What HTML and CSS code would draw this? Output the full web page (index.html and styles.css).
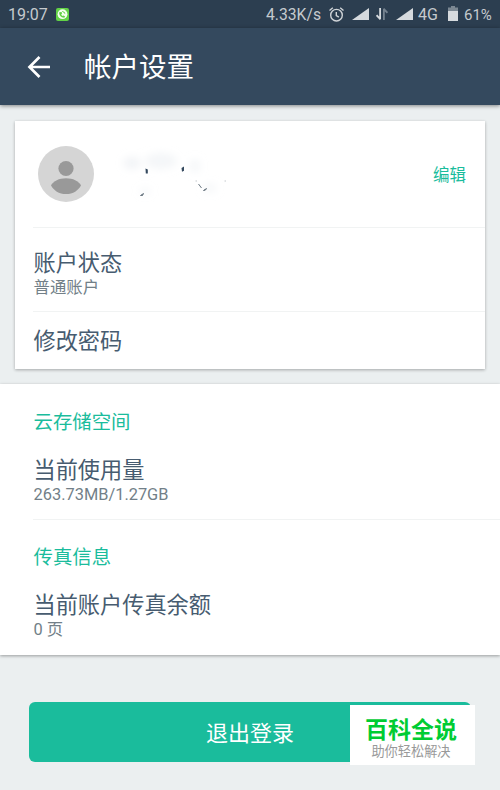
FILE: index.html
```html
<!DOCTYPE html>
<html lang="zh-CN">
<head>
    <meta charset="UTF-8">
    <meta name="viewport" content="width=device-width, initial-scale=1.0">
    <title>帐户设置</title>
    <link rel="stylesheet" href="styles.css">
</head>
<body>
    <div class="status-bar">
        <span class="status-bar__time">19:07</span>
        <svg class="status-bar__app" width="13" height="13" viewBox="0 0 13 13" aria-hidden="true">
            <rect width="13" height="13" rx="2" fill="#62d246"/>
            <circle cx="6.5" cy="6.2" r="4.9" fill="#f4fff0"/>
            <path d="M3.200 4.300c-.3 3 1.800 5.300 5 5.400l1-1.300-1.700-1-1 .6c-.7-.4-1.100-1-1.300-1.700l.9-.8-.5-1.400zM6 3.400c1.800-.2 3 .8 3.400 2.300l-1.200-.2C7.800 4.500 7.200 4 6 4z" fill="#62d246"/>
        </svg>
        <div class="status-bar__right">
            <span class="status-bar__speed">4.33K/s</span>
            <svg class="status-bar__alarm" width="15" height="15" viewBox="0 0 15 15" fill="none" stroke="#d0d4d8" stroke-width="1.4" aria-hidden="true">
                <circle cx="7.500" cy="8.200" r="5.800"/>
                <path d="M7.300 5v3.500l2.600 1.700M.5 3.500L3.800 .7M14.500 3.500L11.200 .7"/>
            </svg>
            <svg class="status-bar__signal" width="17" height="12" viewBox="0 0 17 12" aria-hidden="true">
                <path d="M17 0v12H0z" fill="#d6dade"/>
            </svg>
            <svg class="status-bar__data" width="12" height="12" viewBox="0 0 12 12" fill="none" stroke-width="1.800" aria-hidden="true">
                <path d="M4.100 0v11M4.500 11.300L.6 7.200" stroke="#d6dade"/>
                <path d="M7.900 12V1M7.500 .7l3.900 4.100" stroke="#75828f"/>
            </svg>
            <svg class="status-bar__signal" width="17" height="12" viewBox="0 0 17 12" aria-hidden="true">
                <path d="M17 0v12H0z" fill="#d6dade"/>
            </svg>
            <span class="status-bar__net">4G</span>
            <svg class="status-bar__battery" width="10" height="15" viewBox="0 0 10 15" aria-hidden="true">
                <path d="M3 0h4v1.500h3V6H0V1.500h3z" fill="#7b8792"/>
                <path d="M0 5h10v10H0z" fill="#d6dade"/>
            </svg>
            <span class="status-bar__level">61%</span>
        </div>
    </div>

    <header class="app-bar">
        <a href="#" class="app-bar__back" aria-label="返回">
            <svg width="24" height="24" viewBox="0 0 24 24" fill="none" stroke="#fff" stroke-width="2.700">
                <path d="M23 12H2.500M12.500 2L2.500 12l10 10"/>
            </svg>
        </a>
        <h1 class="app-bar__title">帐户设置</h1>
    </header>

    <main>
        <section class="card">
            <div class="profile">
                <svg class="profile__avatar" width="56" height="56" viewBox="0 0 56 56" aria-hidden="true">
                    <circle cx="28" cy="28" r="28" fill="#d5d5d5"/>
                    <circle cx="28" cy="22.500" r="7.600" fill="#999"/>
                    <path d="M13 39.200C15.500 35 21 32.200 28 32.200S40.500 35 43 39.200C40.500 44.500 35 48 28 48S15.500 44.500 13 39.200z" fill="#999"/>
                </svg>
                <!-- 名称和邮箱已抹去 -->
                <svg class="profile__name" width="120" height="56" viewBox="0 0 120 56" aria-hidden="true">
                    <defs>
                        <filter id="smudge" x="-100%" y="-100%" width="300%" height="300%">
                            <feGaussianBlur stdDeviation="4"/>
                        </filter>
                    </defs>
                    <g filter="url(#smudge)" fill="#dfe5eb">
                        <ellipse cx="17" cy="17" rx="9" ry="6" opacity=".45"/>
                        <ellipse cx="46" cy="15" rx="16" ry="8" opacity=".35"/>
                        <ellipse cx="80" cy="20" rx="5" ry="7" opacity=".35"/>
                        <ellipse cx="30" cy="45" rx="6" ry="3" opacity=".35"/>
                        <ellipse cx="95" cy="42" rx="7" ry="4" opacity=".35"/>
                    </g>
                    <path d="M30.500 22.500l2.300 1v4h-2zM66.500 22l2.500-1.500v4.300l-2 1z" fill="#34495e"/>
                    <path d="M25.500 49.500l3-2-1 2zM83.500 38l3 4M88.500 44.500l3-2-1 1.500z" fill="#6b7882" stroke="#6b7882"/>
                    <path d="M80.500 35h1.500M109.500 35h1.500" stroke="#c4c9cd"/>
                </svg>
                <a href="#" class="profile__edit">编辑</a>
            </div>
            <div class="item item--status">
                <div class="item__title">账户状态</div>
                <div class="item__text">普通账户</div>
            </div>
            <div class="item item--password">
                <div class="item__title">修改密码</div>
            </div>
        </section>

        <section class="panel">
            <div class="group">
                <h2 class="group__title">云存储空间</h2>
                <div class="item__title">当前使用量</div>
                <div class="item__text">263.73MB/1.27GB</div>
            </div>
            <div class="group">
                <h2 class="group__title">传真信息</h2>
                <div class="item__title">当前账户传真余额</div>
                <div class="item__text">0 页</div>
            </div>
        </section>

        <div class="actions">
            <button class="btn">退出登录</button>
            <div class="watermark">
                <div class="watermark__name">百科全说</div>
                <div class="watermark__text">助你轻松解决</div>
            </div>
        </div>
    </main>
</body>
</html>
```
FILE: styles.css
```css
:root {
    --primary: #1abc9c;
    --dark: #34495e;
    --darker: #2c3e50;
    --bg: #ebeff0;
    --grey: #727f88;
    --line: #f1f3f3;
    --font-family-base: Roboto, 'Noto Sans CJK SC', sans-serif;
}

* {
    box-sizing: border-box;
}

body {
    margin: 0;
    min-height: 790px;
    font-family: var(--font-family-base);
    background: var(--bg);
    color: #475c70;
    overflow: hidden;
}

a {
    text-decoration: none;
}

svg {
    display: block;
    flex-shrink: 0;
}

.status-bar {
    display: flex;
    align-items: center;
    height: 28px;
    padding: 0 8px;
    background: var(--darker);
    color: #c5cace;
    font-size: 16px;
    line-height: 26px;
    white-space: nowrap;
}

.status-bar span {
    padding-top: 2px;
}

.status-bar__time {
    width: 48px;
}

.status-bar__right {
    display: flex;
    align-items: center;
    margin-left: auto;
}

.status-bar__speed {
    width: 63px;
    font-size: 15.7px;
}

.status-bar__signal {
    margin-left: 8px;
}

.status-bar__data {
    margin-left: 7px;
}

.status-bar__net {
    width: 30px;
    margin-left: 5px;
}

.status-bar__battery {
    margin-bottom: 2px;
}

.status-bar__level {
    width: 28px;
    margin-left: 6px;
    font-size: 15px;
}

.app-bar {
    position: relative;
    display: flex;
    align-items: center;
    height: 77px;
    padding-left: 27px;
    background: var(--dark);
    box-shadow: 0 1px 4px rgba(0,0,0,0.45);
}

.app-bar__title {
    margin: 0 0 0 33px;
    padding-top: 3px;
    color: #fff;
    font-size: 27.5px;
    font-weight: 400;
    line-height: 40px;
}

.card {
    height: 248px;
    margin: 16px 15px 15px;
    padding-left: 18px;
    background: #fff;
    box-shadow: 0 1px 3px rgba(0,0,0,0.3);
}

.profile {
    display: flex;
    align-items: center;
    height: 106px;
    padding: 0 19px 0 5px;
}

.profile__name {
    margin-left: 21px;
}

.profile__edit {
    margin-left: auto;
    color: var(--primary);
    font-size: 16.5px;
}

.item {
    border-top: 1px solid var(--line);
}

.item--status {
    height: 84px;
    padding-top: 21px;
}

.item--password {
    padding-top: 15px;
}

.item__title {
    padding-left: 0.5px;
    font-size: 22.2px;
    line-height: 28px;
}

.item__text {
    padding-left: 0.5px;
    color: var(--grey);
    font-size: 16.4px;
    line-height: 22px;
}

.panel {
    height: 271px;
    padding-left: 33px;
    background: #fff;
    box-shadow: 0 1px 3px rgba(0,0,0,0.35);
}

.group {
    height: 135px;
    padding-top: 25px;
}

.group + .group {
    padding-top: 24px;
    border-top: 1px solid var(--line);
}

.group__title {
    margin: 0 0 19px;
    padding-left: 0.5px;
    color: var(--primary);
    font-size: 19.4px;
    font-weight: 400;
    line-height: 28px;
}

.actions {
    position: relative;
    padding: 47px 29px 28px;
}

.btn {
    display: block;
    width: 100%;
    height: 60px;
    padding: 0 0 2px;
    border: none;
    border-radius: 6px;
    background: var(--primary);
    color: #fff;
    font-family: var(--font-family-base);
    font-size: 22px;
    cursor: pointer;
}

/* 按钮上方的角标 */
.watermark {
    position: absolute;
    top: 50px;
    right: 25px;
    width: 125px;
    height: 60px;
    padding: 12px 3px 0 0;
    background: #fff;
    text-align: center;
}

.watermark__name {
    color: #0c3;
    font-size: 23px;
    font-weight: 700;
    line-height: 28px;
}

.watermark__text {
    color: #999;
    font-size: 13.2px;
    line-height: 14px;
}
```
